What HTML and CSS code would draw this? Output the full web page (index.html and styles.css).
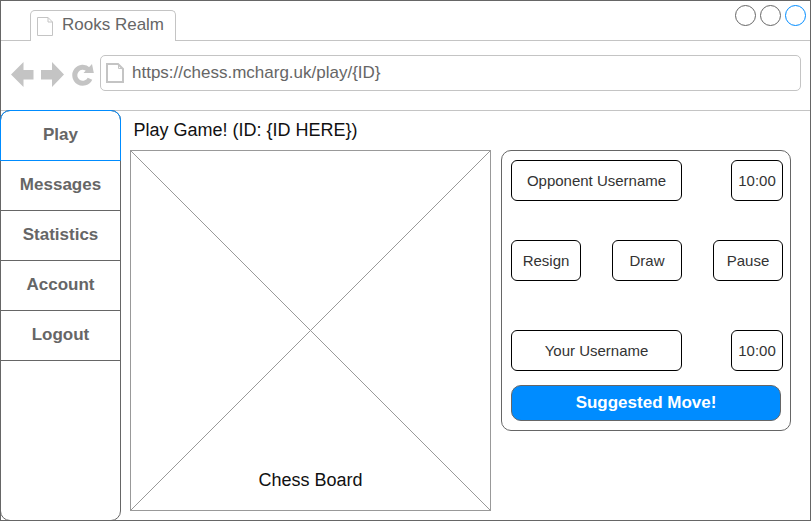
FILE: index.html
```html
<!DOCTYPE html>
<html lang="en">
<head>
<meta charset="utf-8">
<title>Rooks Realm</title>
<link rel="stylesheet" href="styles.css">
</head>
<body>
<div class="window">
  <header class="tabbar">
    <div class="tab">
      <svg class="tab-icon" width="17" height="20" viewBox="0 0 17 20"><path d="M.5 .5H11L15.500 5V18.500H.5Z M11 .5V5H15.500"/></svg>
      <span>Rooks Realm</span>
    </div>
    <div class="controls"><i class="dot"></i><i class="dot"></i><i class="dot dot-active"></i></div>
  </header>
  <div class="toolbar">
    <svg class="nav-icons" width="84" height="28" viewBox="0 0 84 28">
      <path class="solid" d="M0 13.500L12.500 1V9H22.500V18.500H12.500V26Z"/>
      <path class="solid" d="M53 13.500L41 1V9H30V18.500H41V26Z"/>
      <path class="arc" d="M77.300 8.500A8 8 0 1 0 79 17.700"/>
      <path class="solid" d="M81 3L82.800 12L72.500 12Z"/>
    </svg>
    <div class="address">
      <svg class="page-icon" width="18" height="21" viewBox="0 0 18 21"><path d="M1 1H12L17 6V19H1Z"/><path class="fold" d="M12.500 1V5.500H17"/></svg>
      <span>https://chess.mcharg.uk/play/{ID}</span>
    </div>
  </div>
  <div class="content">
    <nav class="menu">
      <a class="item active">Play</a>
      <a class="item">Messages</a>
      <a class="item">Statistics</a>
      <a class="item">Account</a>
      <a class="item">Logout</a>
    </nav>
    <main class="game">
      <h1>Play Game! (ID: {ID HERE})</h1>
      <div class="board">
        <svg class="cross" width="361" height="361" viewBox="0 0 361 361"><path d="M.5 .5L360.500 360.500M360.500 .5L.5 360.500"/></svg>
        <span class="board-label">Chess Board</span>
      </div>
    </main>
    <aside class="panel">
      <div class="row"><div class="box name">Opponent Username</div><div class="box clock">10:00</div></div>
      <div class="row actions"><div class="box action">Resign</div><div class="box action">Draw</div><div class="box action">Pause</div></div>
      <div class="row"><div class="box name">Your Username</div><div class="box clock">10:00</div></div>
      <div class="suggest">Suggested Move!</div>
    </aside>
  </div>
</div>
</body>
</html>
```

FILE: styles.css
```css
* { box-sizing: border-box; }
body {
  margin: 0;
  background: #fff;
  font-family: "Liberation Sans", Arial, sans-serif;
  overflow: hidden;
}
.window {
  width: 811px;
  height: 521px;
  border: 1px solid #666;
  display: flex;
  flex-direction: column;
}
svg { display: block; flex: none; }
.tabbar {
  height: 40px;
  flex: none;
  display: flex;
  justify-content: space-between;
  border-bottom: 1px solid #c4c4c4;
}
.tab {
  width: 146px;
  height: 31px;
  margin: 9px 0 0 29px;
  display: flex;
  border: 1px solid #c4c4c4;
  border-bottom: 0;
  border-radius: 5px 5px 0 0;
  background: #fff;
  font-size: 17px;
  line-height: 20px;
  color: #666;
}
.tab-icon { margin: 6px 8px 0 6px; fill: none; stroke: #c4c4c4; }
.tab span { margin-top: 4px; white-space: nowrap; }
.controls { display: flex; gap: 4px; padding: 4px 4px 0 0; }
.dot {
  width: 21px;
  height: 21px;
  border: 1px solid #666;
  border-radius: 50%;
}
.dot-active { border-color: #008cff; }
.toolbar {
  height: 70px;
  flex: none;
  display: flex;
  padding: 14px 9px 0 10px;
  border-bottom: 1px solid #c4c4c4;
}
.nav-icons { margin-top: 6px; }
.nav-icons .solid { fill: #c4c4c4; }
.nav-icons .arc { fill: none; stroke: #c4c4c4; stroke-width: 5; }
.address {
  flex: 1;
  height: 36px;
  margin-left: 5px;
  padding-left: 5px;
  display: flex;
  border: 1px solid #c4c4c4;
  border-radius: 5px;
  font-size: 17px;
  line-height: 20px;
  color: #666;
}
.page-icon { margin: 7px 8px 0 0; fill: none; stroke: #c4c4c4; stroke-width: 2; }
.page-icon .fold { stroke-width: 1; }
.address span { margin-top: 7px; }
.content { flex: 1; display: flex; align-items: flex-start; }
.menu {
  width: 121px;
  height: 411px;
  margin: -1px 0 0 -1px;
  flex: none;
  border: 1px solid #666;
  border-radius: 10px;
}
.item {
  display: block;
  height: 50px;
  border-bottom: 1px solid #666;
  text-align: center;
  font-size: 17px;
  font-weight: bold;
  line-height: 47px;
  color: #666;
}
.item.active {
  height: 51px;
  margin: -1px -1px 0;
  border: 1px solid #008cff;
  border-radius: 10px 10px 0 0;
}
.game { width: 361px; margin-left: 9px; flex: none; }
h1 {
  margin: 0;
  padding: 9px 0 0 3.5px;
  height: 39px;
  font-size: 18px;
  font-weight: normal;
  line-height: 20px;
  color: #111;
}
.board {
  height: 361px;
  display: grid;
  outline: 1px solid #999;
  outline-offset: -1px;
}
.cross, .board-label { grid-area: 1 / 1; }
.cross { fill: none; stroke: #999; }
.board-label {
  align-self: end;
  justify-self: center;
  margin-bottom: 21px;
  font-size: 18px;
  line-height: 20px;
  color: #111;
}
.panel {
  width: 290px;
  height: 281px;
  margin: 39px 0 0 10px;
  padding: 9px 7px 0 9px;
  flex: none;
  border: 1px solid #666;
  border-radius: 10px;
}
.row { display: flex; justify-content: space-between; }
.actions { margin: 39px 0 49px; }
.box {
  height: 41px;
  border: 1px solid #000;
  border-radius: 6px;
  text-align: center;
  font-size: 15px;
  line-height: 40px;
  color: #333;
}
.name { width: 171px; }
.clock { width: 52px; }
.action { width: 70px; }
.suggest {
  width: 270px;
  height: 36px;
  margin-top: 14px;
  border: 1px solid #666;
  border-radius: 10px;
  background: #008cff;
  color: #fff;
  text-align: center;
  font-size: 17px;
  font-weight: bold;
  line-height: 33px;
}
```
